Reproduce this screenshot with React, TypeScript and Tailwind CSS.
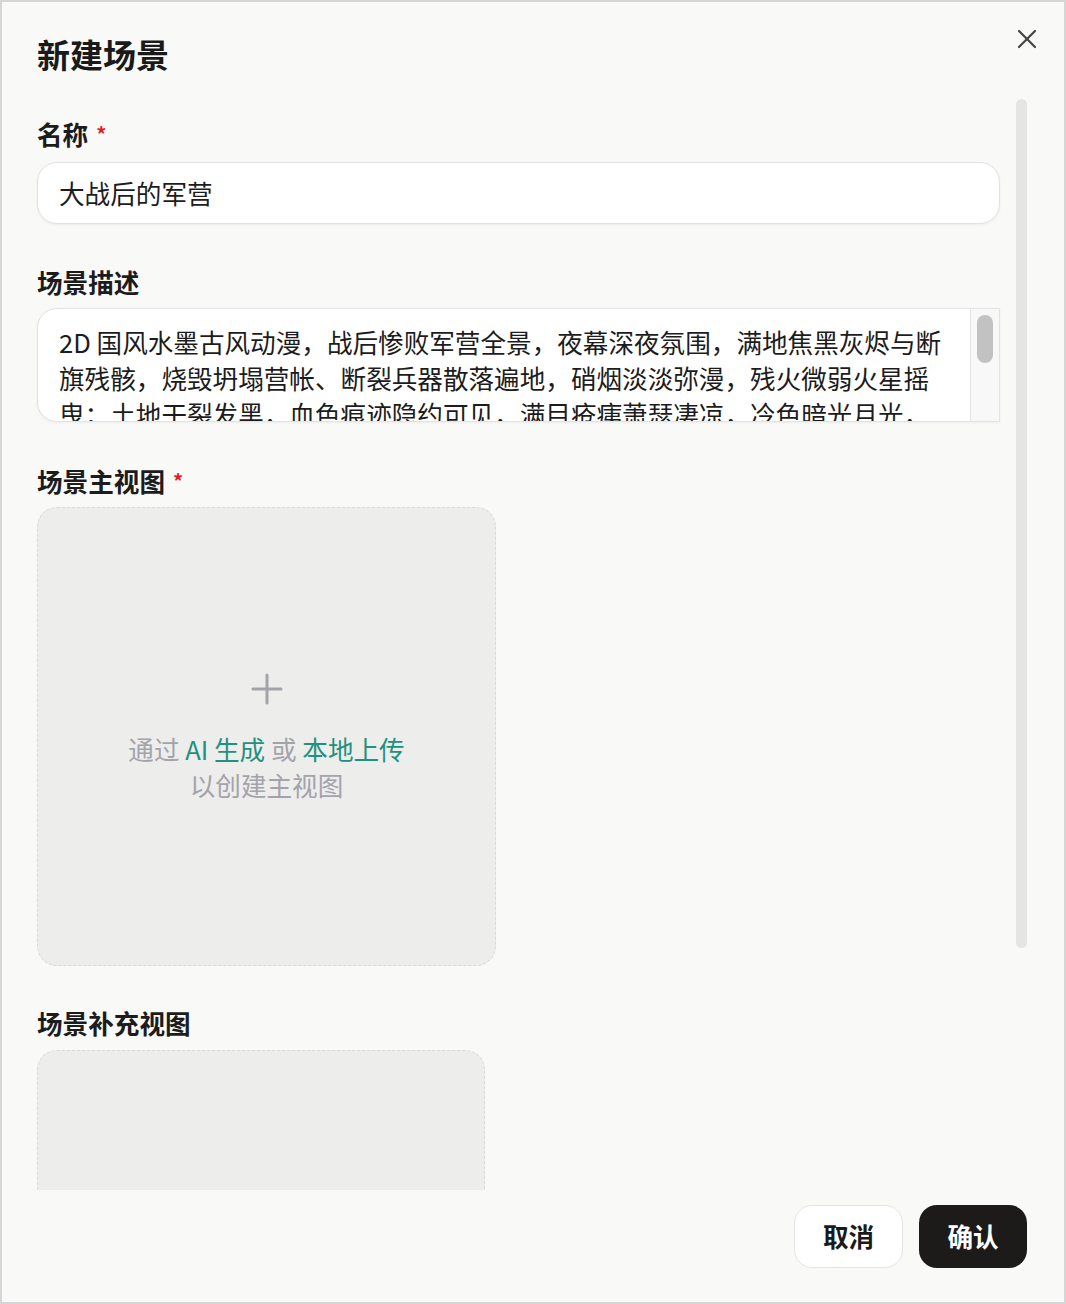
import { ReactNode } from 'react'

const description =
  '2D 国风水墨古风动漫，战后惨败军营全景，夜幕深夜氛围，满地焦黑灰烬与断旗残骸，烧毁坍塌营帐、断裂兵器散落遍地，硝烟淡淡弥漫，残火微弱火星摇曳；土地干裂发黑，血色痕迹隐约可见，满目疮痍萧瑟凄凉，冷色暗光月光，寒风卷起尘沙，远处山峦隐没于夜色之中。'

function FieldLabel({ children, required }: { children: ReactNode; required?: boolean }) {
  return (
    <div className="flex h-[36px] items-center gap-[8px] text-[25.6px] font-semibold leading-[36px] text-[#1c1c1c]">
      <span>{children}</span>
      {required && <span className="text-[20px] text-[#e11d1d]">*</span>}
    </div>
  )
}

function PlusGlyph() {
  return (
    <svg width="32" height="32" viewBox="0 0 32 32" fill="none" stroke="#a3a3a9" strokeWidth="3" strokeLinecap="round">
      <line x1="16" y1="2" x2="16" y2="30" />
      <line x1="2" y1="16" x2="30" y2="16" />
    </svg>
  )
}

export default function App() {
  return (
    <div
      className="flex h-[1304px] w-[1066px] flex-col border-2 border-[#d6d6d6] bg-[#f9f9f8]"
      style={{ fontFamily: '"Noto Sans CJK SC", "Noto Sans", sans-serif' }}
    >
      {/* header */}
      <div className="flex h-[90px] shrink-0 items-start justify-between pl-[35px] pr-[25px]">
        <h1 className="pt-[30px] text-[33px] font-bold leading-[44px] text-[#1a1a1a]">新建场景</h1>
        <button type="button" aria-label="关闭" className="mt-[25px] grid h-[24px] w-[24px] place-items-center">
          <svg width="20" height="20" viewBox="0 0 20 20" fill="none" stroke="#454545" strokeWidth="2.2" strokeLinecap="round">
            <line x1="2" y1="2" x2="18" y2="18" />
            <line x1="18" y1="2" x2="2" y2="18" />
          </svg>
        </button>
      </div>

      {/* body */}
      <div className="relative h-[1098px] shrink-0 overflow-hidden pl-[35px]">
        <div className="flex w-[963px] flex-col pt-[24px]">
          <FieldLabel required>名称</FieldLabel>
          <div className="mt-[10px] flex h-[62px] items-center rounded-[20px] border border-[#e2e2e2] bg-white px-[21px] text-[25.6px] text-[#1c1c1c] shadow-[0_1px_3px_rgba(0,0,0,0.05)]">
            大战后的军营
          </div>

          <div className="mt-[40px]">
            <FieldLabel>场景描述</FieldLabel>
          </div>
          <div className="mt-[8px] flex h-[114px] overflow-hidden rounded-l-[20px] border border-[#e2e2e2] bg-white shadow-[0_1px_3px_rgba(0,0,0,0.05)]">
            <div className="flex-1 overflow-hidden pl-[21px] pr-[21px] pt-[15px] text-[25.6px] leading-[36px] text-[#1c1c1c]">
              {description}
            </div>
            <div className="w-[29px] shrink-0 border-l border-[#e6e6e6] bg-[#f8f8f8] pt-[6px]">
              <div className="ml-[6px] h-[48px] w-[16px] rounded-full bg-[#c2c2c2]" />
            </div>
          </div>

          <div className="mt-[41px]">
            <FieldLabel required>场景主视图</FieldLabel>
          </div>
          <div className="mt-[8px] flex h-[459px] w-[459px] flex-col items-center justify-center rounded-[20px] border border-dashed border-[#d9d9d9] bg-[#ededec] pt-[2px]">
            <PlusGlyph />
            <div className="mt-[26px] text-center text-[25.6px] leading-[36px] text-[#a3a3ab]">
              <div>
                通过 <span className="text-[#1f9180]">AI 生成</span> 或 <span className="text-[#1f9180]">本地上传</span>
              </div>
              <div>以创建主视图</div>
            </div>
          </div>

          <div className="mt-[39px]">
            <FieldLabel>场景补充视图</FieldLabel>
          </div>
          <div className="mt-[9px] h-[448px] w-[448px] shrink-0 rounded-[20px] border border-dashed border-[#d9d9d9] bg-[#ededec]" />
        </div>

        {/* scroll thumb */}
        <div className="absolute right-[37px] top-[7px] h-[849px] w-[11px] rounded-full bg-[#e5e5e3]" />
      </div>

      {/* footer */}
      <div className="flex flex-1 items-start justify-end gap-[16px] pr-[37px] pt-[15px]">
        <button
          type="button"
          className="h-[63px] w-[109px] rounded-[18px] border border-[#e4e4e4] bg-white text-[25.6px] font-bold text-[#1a1a1a]"
        >
          取消
        </button>
        <button type="button" className="h-[63px] w-[108px] rounded-[18px] bg-[#1c1b19] text-[25.6px] font-bold text-white">
          确认
        </button>
      </div>
    </div>
  )
}
